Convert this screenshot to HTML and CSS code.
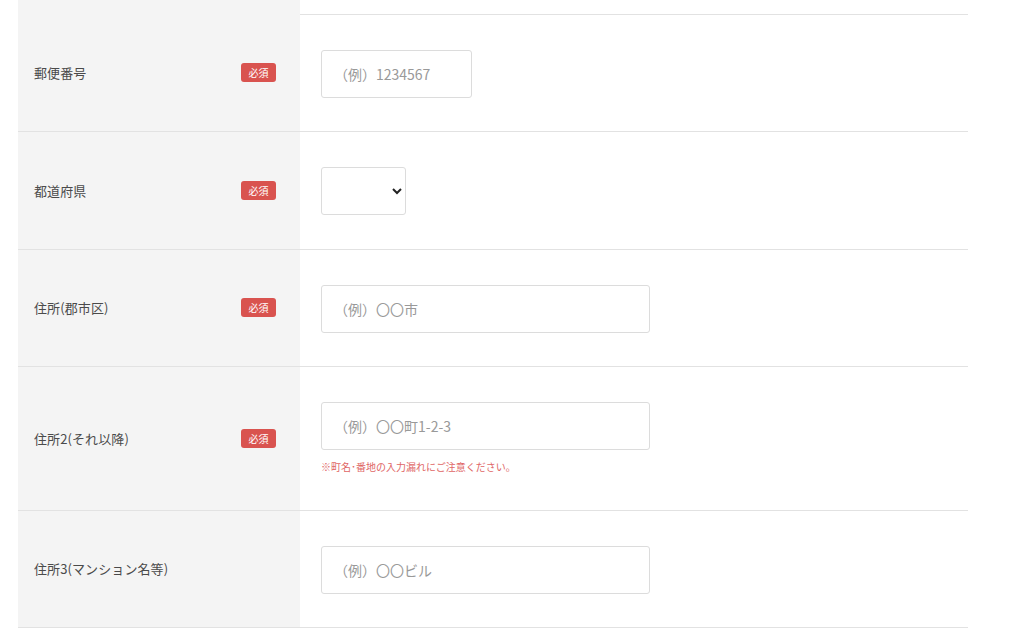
FILE: index.html
```html
<!DOCTYPE html>
<html lang="ja">
<head>
<meta charset="utf-8">
<link rel="stylesheet" href="styles.css">
</head>
<body>
<div class="form">
  <div class="row row-partial">
    <div class="label-cell"></div>
    <div class="field-cell"></div>
  </div>
  <div class="row">
    <div class="label-cell"><span class="label">郵便番号</span><span class="badge">必須</span></div>
    <div class="field-cell"><input class="input input-short" type="text" placeholder="（例）1234567"></div>
  </div>
  <div class="row">
    <div class="label-cell"><span class="label">都道府県</span><span class="badge">必須</span></div>
    <div class="field-cell"><select class="select"><option></option></select></div>
  </div>
  <div class="row">
    <div class="label-cell"><span class="label">住所(郡市区)</span><span class="badge">必須</span></div>
    <div class="field-cell"><input class="input input-wide" type="text" placeholder="（例）〇〇市"></div>
  </div>
  <div class="row">
    <div class="label-cell"><span class="label">住所2(それ以降)</span><span class="badge">必須</span></div>
    <div class="field-cell field-note">
      <input class="input input-wide" type="text" placeholder="（例）〇〇町1-2-3">
      <p class="note">※町名･番地の入力漏れにご注意ください。</p>
    </div>
  </div>
  <div class="row">
    <div class="label-cell"><span class="label">住所3(マンション名等)</span></div>
    <div class="field-cell"><input class="input input-wide" type="text" placeholder="（例）〇〇ビル"></div>
  </div>
</div>
</body>
</html>
```
FILE: styles.css
```css
html, body {
  margin: 0;
  padding: 0;
  background: #fff;
}
body {
  font-family: "Noto Sans CJK JP", "Noto Sans", sans-serif;
  color: #444;
  overflow: hidden;
}
.form {
  margin-left: 18px;
  width: 950px;
}
.row {
  display: grid;
  grid-template-columns: 282px 1fr;
  border-bottom: 1px solid #e2e2e2;
}
.row-partial {
  height: 13.5px;
}
.label-cell {
  background: #f4f4f4;
  display: flex;
  align-items: center;
  justify-content: space-between;
  padding: 0 24px 0 16px;
}
.label {
  font-size: 13px;
  color: #4a4a4a;
  letter-spacing: 0.1px;
}
.badge {
  display: inline-block;
  width: 35px;
  height: 19px;
  line-height: 19px;
  text-align: center;
  background: #d9534f;
  color: #fff;
  font-size: 10px;
  border-radius: 3px;
}
.field-cell {
  padding: 35px 20px 33.5px 21px;
  display: flex;
  flex-direction: column;
  align-items: flex-start;
}
.field-note {
  padding-top: 34.5px;
  padding-bottom: 36px;
}
.input, .select {
  box-sizing: border-box;
  height: 48px;
  border: 1px solid #dcdcdc;
  border-radius: 3px;
  background: #fff;
  font-family: "Noto Sans CJK JP", "Noto Sans", sans-serif;
  font-size: 14px;
  color: #444;
  padding: 0 12px;
  margin: 0;
  outline: none;
}
.input::placeholder {
  color: #999;
}
.input-short {
  width: 151px;
}
.input-wide {
  width: 329px;
}
.select {
  width: 85px;
  padding: 0 4px;
  color: #222;
}
.note {
  margin: 10px 0 0;
  font-size: 10px;
  line-height: 14px;
  color: #e06666;
}
```
